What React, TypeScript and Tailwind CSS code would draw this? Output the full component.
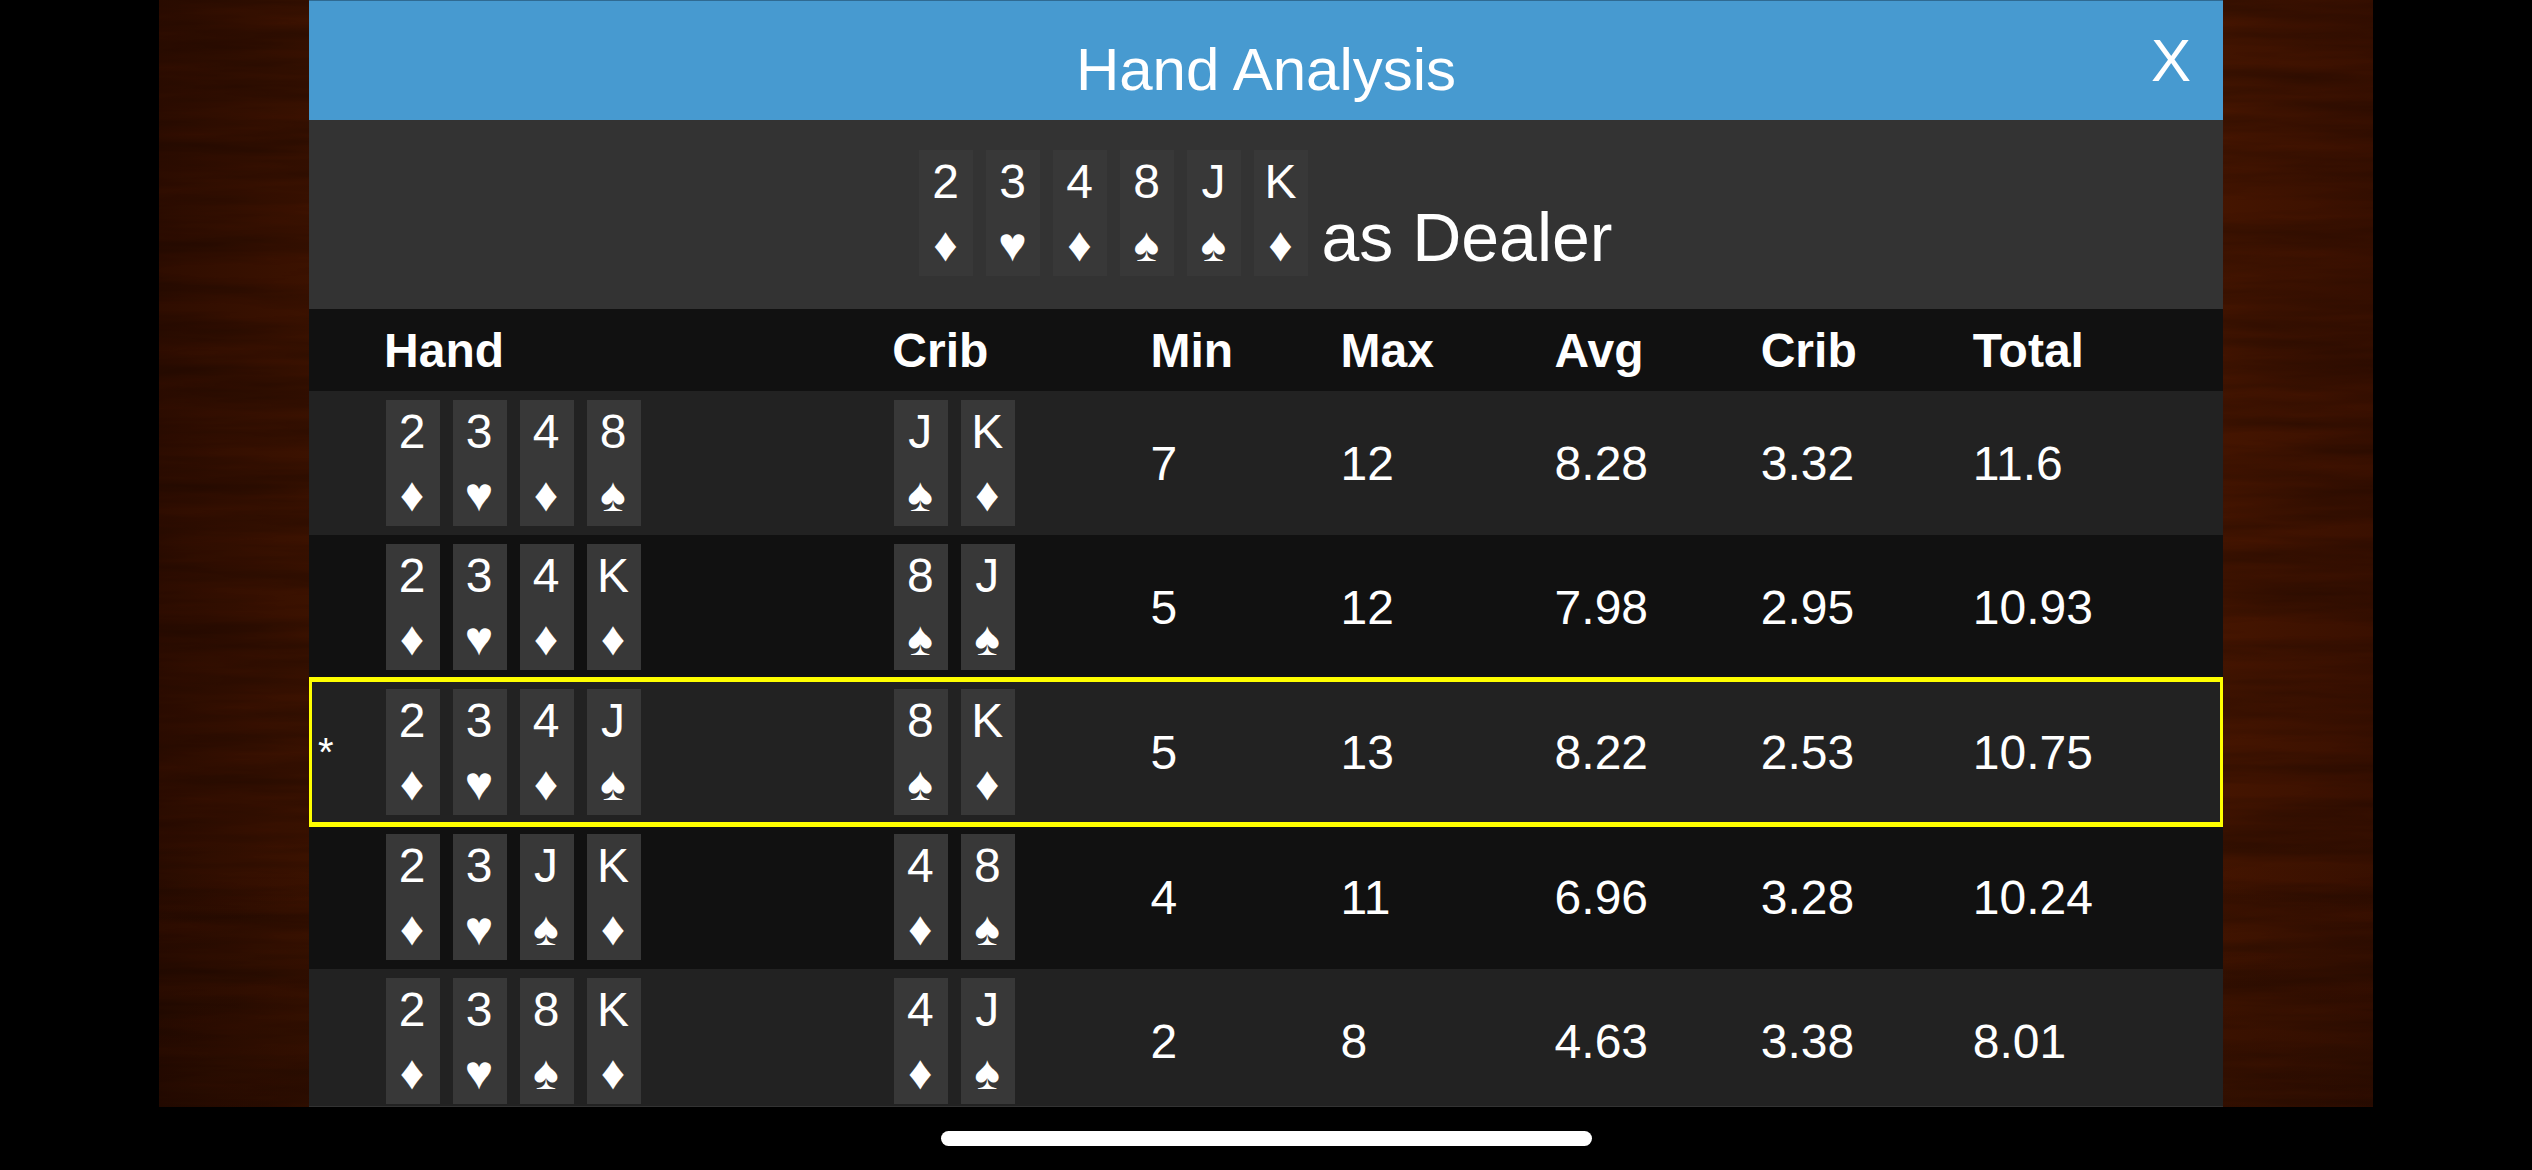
type Suit = '♦' | '♥' | '♠' | '♣';

interface PlayingCard {
  rank: string;
  suit: Suit;
}

interface HandResult {
  hand: PlayingCard[];
  crib: PlayingCard[];
  min: number;
  max: number;
  avg: number;
  cribAvg: number;
  total: number;
  played?: boolean;
}

const two: PlayingCard = { rank: '2', suit: '♦' };
const three: PlayingCard = { rank: '3', suit: '♥' };
const four: PlayingCard = { rank: '4', suit: '♦' };
const eight: PlayingCard = { rank: '8', suit: '♠' };
const jack: PlayingCard = { rank: 'J', suit: '♠' };
const king: PlayingCard = { rank: 'K', suit: '♦' };

const dealt = [two, three, four, eight, jack, king];

const results: HandResult[] = [
  { hand: [two, three, four, eight], crib: [jack, king], min: 7, max: 12, avg: 8.28, cribAvg: 3.32, total: 11.6 },
  { hand: [two, three, four, king], crib: [eight, jack], min: 5, max: 12, avg: 7.98, cribAvg: 2.95, total: 10.93 },
  { hand: [two, three, four, jack], crib: [eight, king], min: 5, max: 13, avg: 8.22, cribAvg: 2.53, total: 10.75, played: true },
  { hand: [two, three, jack, king], crib: [four, eight], min: 4, max: 11, avg: 6.96, cribAvg: 3.28, total: 10.24 },
  { hand: [two, three, eight, king], crib: [four, jack], min: 2, max: 8, avg: 4.63, cribAvg: 3.38, total: 8.01 },
];

function Card({ card }: { card: PlayingCard }) {
  return (
    <span className="mr-[13px] inline-block w-[54px] bg-[#383838] pr-0.5 text-center text-5xl leading-[63px]">
      <span className="block">{card.rank}</span>
      <span className="block">{card.suit}</span>
    </span>
  );
}

function CardList({ cards }: { cards: PlayingCard[] }) {
  return (
    <div className="flex pl-0.5">
      {cards.map((card) => (
        <Card key={card.rank} card={card} />
      ))}
    </div>
  );
}

function WoodBackground() {
  return (
    <svg className="absolute inset-0 h-full w-full" aria-hidden="true">
      <defs>
        <linearGradient id="wood" x1="0" y1="0" x2="1" y2="0">
          <stop offset="0" stopColor="#2f0d00" />
          <stop offset="0.07" stopColor="#3c1200" />
          <stop offset="0.93" stopColor="#451500" />
          <stop offset="1" stopColor="#3a1000" />
        </linearGradient>
        <linearGradient id="shade" x1="0" y1="0" x2="0" y2="1">
          <stop offset="0.75" stopColor="#000" stopOpacity="0" />
          <stop offset="1" stopColor="#000" stopOpacity="0.2" />
        </linearGradient>
        <filter id="grain" x="0" y="0" width="100%" height="100%" colorInterpolationFilters="sRGB">
          <feTurbulence type="fractalNoise" baseFrequency="0.004 0.05" numOctaves="4" seed="7" />
          <feColorMatrix values="0 0 0 0 0  0 0 0 0 0  0 0 0 0 0  1.6 0 0 0 -0.5" />
        </filter>
      </defs>
      <rect width="100%" height="100%" fill="url(#wood)" />
      <rect width="100%" height="100%" filter="url(#grain)" opacity="0.3" />
      <rect width="100%" height="100%" fill="url(#shade)" />
    </svg>
  );
}

function ResultRow({ result }: { result: HandResult }) {
  return (
    <tr
      className={
        result.played
          ? 'h-[146px] bg-[#222] outline-[5px] -outline-offset-3 outline-[#ff0]'
          : 'h-36 odd:bg-[#222] even:bg-[#111]'
      }
    >
      <td className="pl-[9px] text-[40px]">{result.played ? '*' : ''}</td>
      <td>
        <CardList cards={result.hand} />
      </td>
      <td>
        <CardList cards={result.crib} />
      </td>
      <td>{result.min}</td>
      <td>{result.max}</td>
      <td>{result.avg}</td>
      <td>{result.cribAvg}</td>
      <td>{result.total}</td>
    </tr>
  );
}

export default function App() {
  return (
    <div className="flex h-screen flex-col bg-black font-['Liberation_Sans',Arial,sans-serif] text-white">
      <div className="relative mx-[159px] min-h-0 flex-1 overflow-hidden px-[150px]">
        <WoodBackground />
        <main className="relative flex h-full flex-col overflow-hidden border-b border-[#333] bg-[#222]">
          <header className="grid h-[120px] shrink-0 grid-cols-[1fr_auto_1fr] items-start border-t border-[#2f6a92] bg-[#479ad0] text-[60px] leading-[60px]">
            <h1 className="col-start-2 pt-[39px]">Hand Analysis</h1>
            <button type="button" className="cursor-pointer justify-self-end pt-[30px] pr-8">
              X
            </button>
          </header>

          <h2 className="h-[189px] shrink-0 bg-[#333] pt-[30px] text-center text-[68px] leading-[68px]">
            {dealt.map((card) => (
              <Card key={card.rank} card={card} />
            ))}
            as Dealer
          </h2>

          <table className="w-full table-fixed text-left text-5xl leading-[63px]">
            <colgroup>
              <col className="w-[75px]" />
              <col className="w-[508px]" />
              <col className="w-[258px]" />
              <col className="w-[190px]" />
              <col className="w-[214px]" />
              <col className="w-[206px]" />
              <col className="w-[212px]" />
              <col className="w-[250px]" />
            </colgroup>
            <thead>
              <tr className="h-[82px] bg-[#111] font-bold">
                <td></td>
                <th>Hand</th>
                <th>Crib</th>
                <th>Min</th>
                <th>Max</th>
                <th>Avg</th>
                <th>Crib</th>
                <th>Total</th>
              </tr>
            </thead>
            <tbody>
              {results.map((result) => (
                <ResultRow key={result.total} result={result} />
              ))}
            </tbody>
          </table>
        </main>
      </div>

      <footer className="flex h-[63px] shrink-0 justify-center pt-6">
        <div className="h-[15px] w-[651px] rounded-full bg-white" />
      </footer>
    </div>
  );
}
